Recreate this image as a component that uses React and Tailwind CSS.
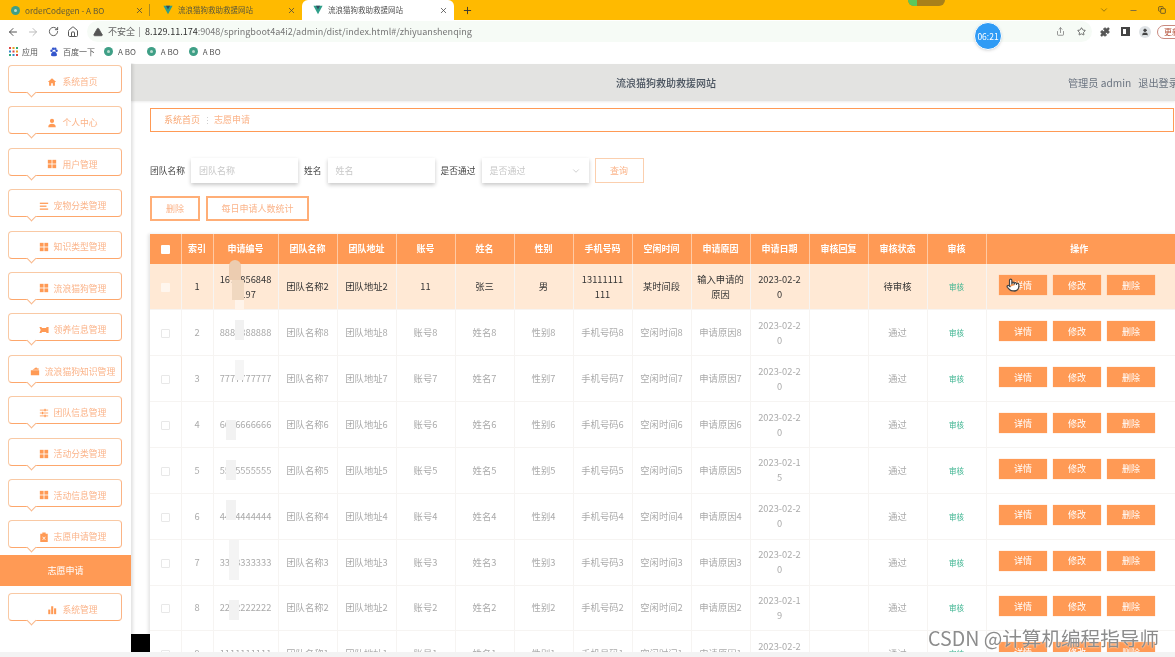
import { ArrowLeft, ArrowRight, RotateCw, Home, TriangleAlert, Share, Star, Puzzle, User, ChevronDown, Minus, Copy, Plus, X, Pointer } from 'lucide-react';

const font = { fontFamily: '"Noto Sans CJK SC", "Liberation Sans", sans-serif' };

const icons = {
  home: <path d="M12 3 2 12h3v9h5v-6h4v6h5v-9h3z" />,
  user: (
    <>
      <circle cx="12" cy="7" r="5" />
      <path d="M3 22c0-6 4-8 9-8s9 2 9 8z" />
    </>
  ),
  grid: (
    <>
      <rect x="2" y="2" width="9" height="9" />
      <rect x="13" y="2" width="9" height="9" />
      <rect x="2" y="13" width="9" height="9" />
      <rect x="13" y="13" width="9" height="9" />
    </>
  ),
  list: (
    <>
      <rect x="2" y="4" width="20" height="3" />
      <rect x="2" y="11" width="16" height="3" />
      <rect x="2" y="18" width="20" height="3" />
    </>
  ),
  ticket: <path d="M1 5h5l1 2h10l1-2h5v14h-5l-1-2H7l-1 2H1l3-7z" />,
  wallet: <path d="M2 10h20v12H2zM6 9l9-6 2 3 3-1 1 4z" />,
  sliders: (
    <>
      <rect x="2" y="4" width="20" height="2" />
      <rect x="13" y="2" width="3" height="6" />
      <rect x="2" y="11" width="20" height="2" />
      <rect x="7" y="9" width="3" height="6" />
      <rect x="2" y="18" width="20" height="2" />
      <rect x="13" y="16" width="3" height="6" />
    </>
  ),
  clip: <path fillRule="evenodd" d="M3 4h5V1h8v3h5v20H3zM9 11l-1 1 3 3-3 3 1 1 3-3 3 3 1-1-3-3 3-3-1-1-3 3z" />,
  bars: (
    <>
      <rect x="3" y="11" width="5" height="11" />
      <rect x="10" y="3" width="5" height="19" />
      <rect x="17" y="8" width="5" height="14" />
    </>
  ),
};

const menus = [
  ['home', '系统首页'],
  ['user', '个人中心'],
  ['grid', '用户管理'],
  ['list', '宠物分类管理'],
  ['grid', '知识类型管理'],
  ['grid', '流浪猫狗管理'],
  ['ticket', '领养信息管理'],
  ['wallet', '流浪猫狗知识管理'],
  ['sliders', '团队信息管理'],
  ['grid', '活动分类管理'],
  ['grid', '活动信息管理'],
  ['clip', '志愿申请管理'],
];

const columns = ['索引', '申请编号', '团队名称', '团队地址', '账号', '姓名', '性别', '手机号码', '空闲时间', '申请原因', '申请日期', '审核回复', '审核状态', '审核'];

const rows = [
  { no: 2, id: '8888888888', n: 8, date: '2023-02-20' },
  { no: 3, id: '7777777777', n: 7, date: '2023-02-20' },
  { no: 4, id: '6666666666', n: 6, date: '2023-02-20' },
  { no: 5, id: '5555555555', n: 5, date: '2023-02-15' },
  { no: 6, id: '4444444444', n: 4, date: '2023-02-20' },
  { no: 7, id: '3333333333', n: 3, date: '2023-02-20' },
  { no: 8, id: '2222222222', n: 2, date: '2023-02-19' },
  { no: 9, id: '1111111111', n: 1, date: '2023-02-20' },
];

const patches = [
  'left-[229px] top-[260px] w-[12px] h-[20px] bg-[#ecccb0] rounded-t-md',
  'left-[232px] top-[280px] w-[12px] h-[20px] bg-[#f0d8c0]',
  'left-[235px] top-[300px] w-[9px] h-[10px] bg-[#fff4ea]',
  'left-[235px] top-[320px] w-[9px] h-[20px] bg-[#f1f1f1]',
  'left-[235px] top-[360px] w-[9px] h-[20px] bg-[#f5f5f5]',
  'left-[226px] top-[420px] w-[10px] h-[20px] bg-[#f2f2f2]',
  'left-[226px] top-[460px] w-[10px] h-[20px] bg-[#f2f2f2]',
  'left-[226px] top-[500px] w-[10px] h-[20px] bg-[#f2f2f2]',
  'left-[229px] top-[540px] w-[10px] h-[40px] bg-[#f4f4f4]',
  'left-[229px] top-[600px] w-[10px] h-[20px] bg-[#f2f2f2]',
];

function VueLogo({ size = 10 }) {
  return (
    <svg width={size} height={size} viewBox="0 0 24 24" className="shrink-0">
      <path d="M1 2h22L12 22z" fill="#2f9f8a" />
      <path d="M7 2h10l-5 9z" fill="#35495e" />
    </svg>
  );
}

function Leaf() {
  return (
    <span className="w-[9px] h-[9px] rounded-full bg-[#3f9f86] flex items-center justify-center shrink-0">
      <span className="w-[3px] h-[3px] rounded-full bg-[#b9dccf]" />
    </span>
  );
}

function MenuItem({ icon, label }) {
  return (
    <div className="relative h-[28px] mx-[8px] w-[114px] mb-[13.4px] border border-[#f9c9a4] border-r-[#fbb485] border-b-[#fda76c] rounded-[4px] bg-white flex items-center justify-center gap-[5px] pt-[5px] pl-[15px]">
      <svg width="10" height="10" viewBox="0 0 24 24" fill="#ff9a55" className="shrink-0">
        {icons[icon]}
      </svg>
      <span className="text-[8.8px] text-[#fbb48a] whitespace-nowrap">{label}</span>
      <span className="absolute left-[19px] -bottom-[4px] w-[7px] h-[7px] rotate-45 bg-white border-r border-b border-[#f9b98c]" />
    </div>
  );
}

function Sidebar() {
  return (
    <div className="w-[131px] shrink-0 pt-[2px] bg-white shadow-[2px_0_3px_rgba(0,0,0,0.12)] z-10 flex flex-col">
      {menus.map(([icon, label]) => (
        <MenuItem key={label} icon={icon} label={label} />
      ))}
      <div className="-mt-[6.4px] mb-[7px] h-[31px] bg-[#ff9a55] flex items-center justify-center text-[9px] text-white shrink-0">志愿申请</div>
      <MenuItem icon="bars" label="系统管理" />
    </div>
  );
}

function Field({ label, placeholder, select }) {
  return (
    <div className="flex items-center gap-[6px]">
      <span className="text-[8.75px] text-[#444] whitespace-nowrap">{label}</span>
      <div className="w-[107px] h-[25px] bg-white shadow-[0_2px_4px_rgba(0,0,0,0.22)] flex items-center justify-between pl-[8px] pr-[8px] text-[9px] text-[#c8c8c8]">
        {placeholder}
        {select && <ChevronDown size={10} className="text-[#c8c8c8]" />}
      </div>
    </div>
  );
}

function ActionButtons() {
  return (
    <div className="flex gap-[6px] justify-center pr-[7px] mb-[3px]">
      {['详情', '修改', '删除'].map((t) => (
        <span key={t} className="w-[48px] h-[20px] bg-[#ff9a55] text-white text-[9px] flex items-center justify-center shadow-[0_0_1px_rgba(255,154,85,0.6)]">{t}</span>
      ))}
    </div>
  );
}

function Check({ dim }) {
  return <span className={`inline-block align-middle w-[9px] h-[9px] rounded-[1px] ${dim ? 'bg-white border border-[#e8e8e8]' : 'bg-[#fff6ee]'}`} />;
}

function DataTable() {
  const td = 'border-r border-b border-[#f6f4f2] text-center px-[6px] break-all leading-[15px]';
  return (
    <table className="table-fixed w-[1025px] border-collapse text-[9.3px] shadow-[-2px_0_3px_rgba(0,0,0,0.1)]">
      <colgroup>
        <col className="w-[31px]" />
        <col className="w-[32px]" />
        <col className="w-[65px]" />
        {Array.from({ length: 12 }).map((_, i) => (
          <col key={i} className="w-[59px]" />
        ))}
        <col className="w-[189px]" />
      </colgroup>
      <thead>
        <tr className="h-[30px] bg-[#ff9a55]">
          <th className="border-r border-[#ffc9a3]">
            <span className="inline-block align-middle w-[9px] h-[9px] bg-white rounded-[1px]" />
          </th>
          {columns.map((c) => (
            <th key={c} className="border-r border-[#ffc9a3] text-white font-bold text-[9px] p-0 whitespace-nowrap">{c}</th>
          ))}
          <th className="text-white font-bold text-[9px] p-0 pr-[3px] whitespace-nowrap">操作</th>
        </tr>
      </thead>
      <tbody>
        <tr className="h-[45.86px] bg-[#ffe9d5] text-[#333]">
          <td className={td}><Check /></td>
          <td className={td}>1</td>
          <td className={td}>16758568482197</td>
          <td className={td}>团队名称2</td>
          <td className={td}>团队地址2</td>
          <td className={td}>11</td>
          <td className={td}>张三</td>
          <td className={td}>男</td>
          <td className={td}>13111111111</td>
          <td className={td}>某时间段</td>
          <td className="border-r border-b border-[#f6f4f2] text-center leading-[15px] whitespace-nowrap">输入申请的<br />原因</td>
          <td className={td}>2023-02-20</td>
          <td className={td}></td>
          <td className={td}>待审核</td>
          <td className={`${td} text-[#3bb38f] text-[7.5px]`}>审核</td>
          <td className={td}><ActionButtons /></td>
        </tr>
        {rows.map((r) => (
          <tr key={r.no} className="h-[45.86px] bg-white text-[#aaaaaa]">
            <td className={td}><Check dim /></td>
            <td className={td}>{r.no}</td>
            <td className={td}>{r.id}</td>
            <td className={td}>团队名称{r.n}</td>
            <td className={td}>团队地址{r.n}</td>
            <td className={td}>账号{r.n}</td>
            <td className={td}>姓名{r.n}</td>
            <td className={td}>性别{r.n}</td>
            <td className={td}>手机号码{r.n}</td>
            <td className={td}>空闲时间{r.n}</td>
            <td className={td}>申请原因{r.n}</td>
            <td className={td}>{r.date}</td>
            <td className={td}></td>
            <td className={td}>通过</td>
            <td className={`${td} text-[#3bb38f] text-[7.5px]`}>审核</td>
            <td className={td}><ActionButtons /></td>
          </tr>
        ))}
      </tbody>
    </table>
  );
}

function Main() {
  return (
    <div className="flex-1 min-w-0 overflow-hidden bg-white flex flex-col pt-[1px]">
      <div className="h-[37px] shrink-0 bg-[#e3e3e1] flex items-center pl-[485px] shadow-[0_1px_2px_rgba(0,0,0,0.08)]">
        <span className="text-[10px] font-medium text-[#46505c] whitespace-nowrap">流浪猫狗救助救援网站</span>
        <span className="ml-auto text-[10.2px] text-[#6b7480] whitespace-nowrap pl-[10px]">管理员 admin</span>
        <span className="ml-[7px] text-[10.2px] text-[#6b7480] whitespace-nowrap -mr-[4px]">退出登录</span>
      </div>
      <div className="pl-[19px] pr-[1px] pt-[7px]">
        <div className="h-[24px] border border-[#ff9a55] flex items-center pl-[13px] gap-[2.5px] text-[9px] text-[#fbb48a]">
          <span className="text-[#f9a875]">系统首页</span>
          <span className="text-[#ccc] leading-none">⋮</span>
          <span>志愿申请</span>
        </div>
        <div className="flex items-center gap-[6px] mt-[26px]">
          <Field label="团队名称" placeholder="团队名称" />
          <Field label="姓名" placeholder="姓名" />
          <Field label="是否通过" placeholder="是否通过" select />
          <span className="w-[49px] h-[25px] border border-[#fbcfae] text-[#fbb48a] text-[9px] flex items-center justify-center">查询</span>
        </div>
        <div className="flex gap-[6px] mt-[13px]">
          <span className="w-[50px] h-[25px] border-2 border-[#ff9a55]/80 text-[#fbb48a] text-[9px] flex items-center justify-center">删除</span>
          <span className="w-[103px] h-[25px] border-2 border-[#ff9a55]/80 text-[#fbb48a] text-[9px] flex items-center justify-center">每日申请人数统计</span>
        </div>
        <div className="mt-[13px]">
          <DataTable />
        </div>
      </div>
    </div>
  );
}

function Tab({ title, active, logo }) {
  return (
    <div className={`h-[20px] flex items-center pl-[11px] pr-[6px] gap-[5px] ${active ? 'w-[152px] bg-white rounded-t-[6px] text-[#555]' : 'w-[150px] text-[#5f5a3a]'}`}>
      {logo === 'vue' ? <VueLogo /> : <Leaf />}
      <span className={`whitespace-nowrap flex-1 ${logo === 'vue' ? 'text-[7.5px]' : 'text-[8.2px]'}`}>{title}</span>
      <X size={9} className="text-[#444]" />
    </div>
  );
}

function Chrome() {
  return (
    <div className="shrink-0">
      <div className="h-[20px] bg-[#ffba00] flex items-center">
        <Tab title="orderCodegen - A BO" />
        <span className="w-[1px] h-[12px] bg-[#a98a20] -ml-[1px] mr-[2px]" />
        <Tab title="流浪猫狗救助救援网站" logo="vue" />
        <Tab title="流浪猫狗救助救援网站" logo="vue" active />
        <Plus size={11} className="ml-[8px] text-[#333]" />
        <div className="ml-auto flex items-center gap-[20px] pr-[9px]">
          <ChevronDown size={10} className="text-[#8a6d10]" />
          <Minus size={9} className="text-[#555]" />
          <Copy size={8} className="text-[#333]" />
        </div>
      </div>
      <div className="h-[22px] bg-white flex items-center pl-[7px] pt-[1px] text-[#555]">
        <ArrowLeft size={12} className="shrink-0" />
        <ArrowRight size={12} className="ml-[8px] text-[#bbb] shrink-0" />
        <RotateCw size={11} className="ml-[9px] shrink-0" />
        <Home size={12} className="ml-[8px] shrink-0" />
        <div className="ml-[8px] w-[1005px] h-[21px] rounded-full bg-[#f6fbf6] flex items-center pl-[6px] shrink-0">
          <TriangleAlert size={10} className="fill-[#555] text-[#555] shrink-0" />
          <span className="ml-[5px] text-[9px] text-[#666]">不安全</span>
          <span className="ml-[4px] mr-[5px] w-[1px] h-[10px] bg-[#aaa]" />
          <span className="text-[9.05px] text-[#333] whitespace-nowrap">8.129.11.174<span className="text-[#777]">:9048/springboot4a4i2/admin/dist/index.html#/zhiyuanshenqing</span></span>
          <div className="ml-auto flex items-center gap-[12px] pr-[6px]">
            <Share size={9} className="text-[#777]" />
            <Star size={9} className="text-[#444]" />
          </div>
        </div>
        <Puzzle size={10} className="ml-[8px] fill-[#555] shrink-0" />
        <span className="ml-[11px] w-[9px] h-[9px] border-2 border-[#444] border-r-[4px] shrink-0" />
        <span className="ml-[9px] w-[12px] h-[12px] rounded-full bg-[#dfe3e6] flex items-center justify-center shrink-0">
          <User size={8} className="fill-[#444] text-[#444]" />
        </span>
        <span className="ml-[6px] w-[30px] h-[14px] rounded-l-full border border-[#c98a80] text-[8px] text-[#b5533c] pl-[6px] leading-[12px] whitespace-nowrap shrink-0">更新</span>
      </div>
      <div className="h-[21px] bg-white flex items-center pl-[9px] pb-[2px] text-[8px] text-[#555]">
        <svg width="9" height="9" viewBox="0 0 9 9" className="shrink-0">
          <rect x="0" y="0" width="2" height="2" fill="#d44" />
          <rect x="3.5" y="0" width="2" height="2" fill="#e8a020" />
          <rect x="7" y="0" width="2" height="2" fill="#3a7" />
          <rect x="0" y="3.5" width="2" height="2" fill="#38c" />
          <rect x="3.5" y="3.5" width="2" height="2" fill="#d44" />
          <rect x="7" y="3.5" width="2" height="2" fill="#e8a020" />
          <rect x="0" y="7" width="2" height="2" fill="#3a7" />
          <rect x="3.5" y="7" width="2" height="2" fill="#38c" />
          <rect x="7" y="7" width="2" height="2" fill="#d44" />
        </svg>
        <span className="ml-[4px]">应用</span>
        <svg width="10" height="10" viewBox="0 0 24 24" fill="#3355cc" className="ml-[11px] shrink-0">
          <circle cx="6" cy="9" r="3" />
          <circle cx="18" cy="9" r="3" />
          <circle cx="10" cy="4" r="3" />
          <circle cx="15" cy="4" r="3" />
          <path d="M12 11c-4 0-8 5-7 9 1 3 4 2 7 2s6 1 7-2c1-4-3-9-7-9z" />
        </svg>
        <span className="ml-[4px]">百度一下</span>
        <span className="ml-[9px] flex items-center gap-[5px]"><Leaf />A BO</span>
        <span className="ml-[11px] flex items-center gap-[5px]"><Leaf />A BO</span>
        <span className="ml-[10px] flex items-center gap-[5px]"><Leaf />A BO</span>
      </div>
    </div>
  );
}

export default function App() {
  return (
    <div className="relative w-[1175px] h-[657px] overflow-hidden bg-white flex flex-col blur-[0.4px]" style={font}>
      <Chrome />
      <div className="h-[589px] flex overflow-hidden">
        <Sidebar />
        <Main />
      </div>
      <div className="h-[5px] shrink-0 bg-[#f3f3f3]" />

      {/* overlays from the recording */}
      <div className="absolute left-[908px] top-0 w-[37px] h-[6px] rounded-b-full bg-[#a8801a] overflow-hidden">
        <div className="w-[9px] h-full bg-[#5cc85c]" />
      </div>
      <div className="absolute left-[974px] top-[22px] w-[28px] h-[28px] rounded-full bg-[#2f9bf5] border border-white shadow-sm flex items-center justify-center text-[8.5px] text-white z-20">06:21</div>
      <div className="absolute left-[131px] top-[634px] w-[19px] h-[18px] bg-black z-20" />
      {patches.map((p) => (
        <div key={p} className={`absolute ${p} z-20`} />
      ))}
      <Pointer size={14} className="absolute left-[1006px] top-[278px] fill-white text-[#444] z-20" />
      <div className="absolute left-[928px] top-[625px] text-[19.6px] leading-[26px] text-[#8c8c8c] whitespace-nowrap z-20 [text-shadow:0_0_2px_#fff]">CSDN @计算机编程指导师</div>
    </div>
  );
}
